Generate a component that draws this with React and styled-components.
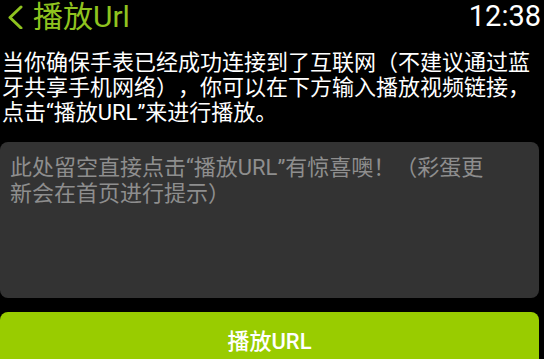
import React from "react";
import styled, { createGlobalStyle } from "styled-components";

const Global = createGlobalStyle`
  html, body { margin: 0; padding: 0; background: #000; }
  body {
    font-family: Roboto, "Noto Sans CJK SC", sans-serif;
    overflow: hidden;
    text-spacing-trim: space-all;
  }
  * { box-sizing: border-box; }
`;

const Page = styled.div`
  width: 544px;
  height: 359px;
  background: #000;
  padding: 0 5px 0 0;
  display: flex;
  flex-direction: column;
  overflow: hidden;
`;

const Header = styled.div`
  height: 50px;
  flex-shrink: 0;
  display: flex;
  align-items: flex-start;
  justify-content: space-between;
`;

const Back = styled.div`
  display: flex;
  align-items: center;
  gap: 10px;
  color: #8fc31f;
  font-size: 30px;
  line-height: 34px;
  padding-left: 7px;
`;

const Time = styled.div`
  color: #fff;
  font-size: 29px;
  line-height: 32px;
  margin-right: -2px;
`;

const Intro = styled.p`
  margin: 0;
  padding-left: 2px;
  color: #fff;
  font-size: 22px;
  line-height: 25px;
  flex-shrink: 0;
  text-spacing-trim: space-all;
`;

const Input = styled.textarea`
  margin-top: 17px;
  height: 156px;
  width: 100%;
  background: #333333;
  border: none;
  border-radius: 8px;
  padding: 13px 40px 12px 10px;
  color: #fff;
  font-family: Roboto, "Noto Sans CJK SC", sans-serif;
  font-size: 22px;
  line-height: 26px;
  resize: none;
  outline: none;
  flex-shrink: 0;
  text-spacing-trim: space-all;
  &::placeholder { color: #8e8e8e; }
`;

const PlayButton = styled.button`
  margin-top: 14px;
  height: 54px;
  width: 100%;
  flex-shrink: 0;
  background: #99cc00;
  border: none;
  border-radius: 8px;
  color: #fff;
  font-family: Roboto, "Noto Sans CJK SC", sans-serif;
  font-size: 22px;
  font-weight: 500;
`;

const Chevron = () => (
  <svg width="16" height="24" viewBox="0 0 16 24">
    <path d="M14 2 L3 12.5 L14 23" fill="none" stroke="#8fc31f" strokeWidth="3" strokeLinecap="round" strokeLinejoin="round" />
  </svg>
);

export default function App() {
  return (
    <>
      <Global />
      <Page>
        <Header>
          <Back>
            <Chevron />
            <span>播放Url</span>
          </Back>
          <Time>12:38</Time>
        </Header>
        <Intro>
          当你确保手表已经成功连接到了互联网（不建议通过蓝牙共享手机网络），你可以在下方输入播放视频链接，点击“播放URL”来进行播放。
        </Intro>
        <Input placeholder="此处留空直接点击“播放URL”有惊喜噢！（彩蛋更新会在首页进行提示）" />
        <PlayButton>播放URL</PlayButton>
      </Page>
    </>
  );
}
